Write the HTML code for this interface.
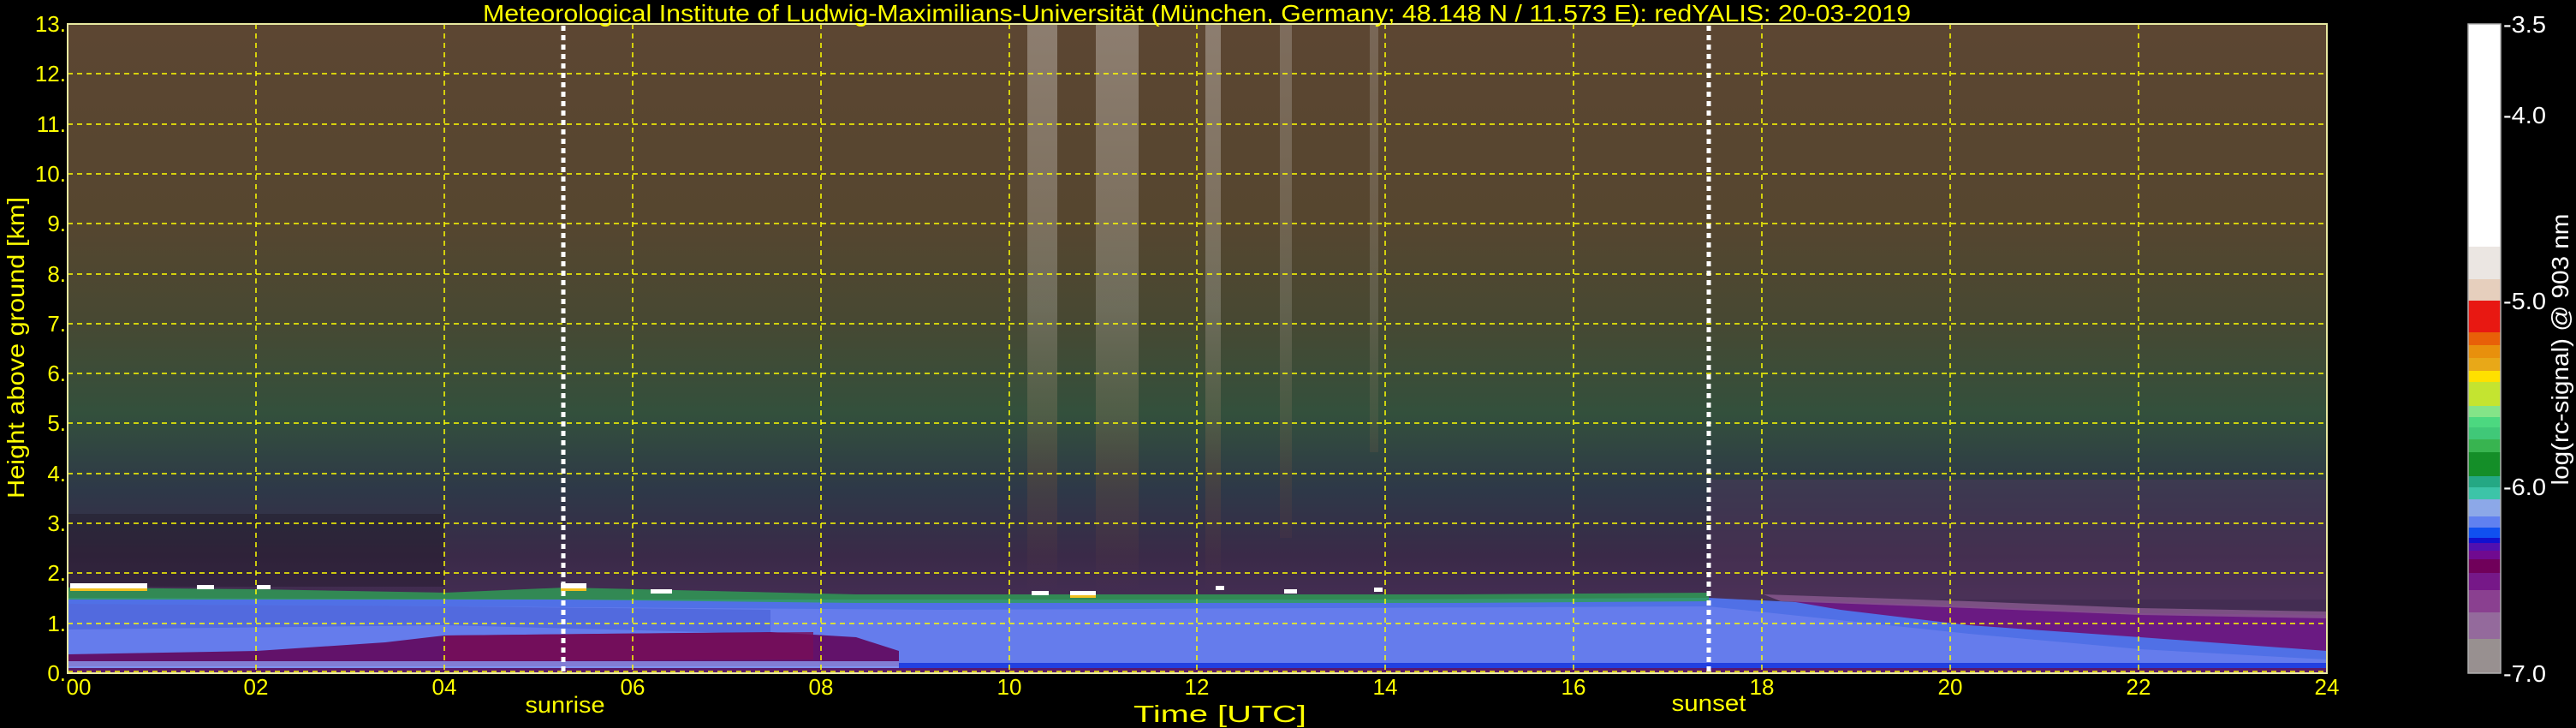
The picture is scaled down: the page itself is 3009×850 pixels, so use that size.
<!DOCTYPE html>
<html><head><meta charset="utf-8"><style>
html,body{margin:0;padding:0;background:#000;width:3009px;height:850px;overflow:hidden}
svg{display:block}
text{font-family:"Liberation Sans","DejaVu Sans",sans-serif;fill:#ffff00}
</style></head><body>
<svg width="3009" height="850" viewBox="0 0 3009 850" xmlns="http://www.w3.org/2000/svg">
<defs>
<linearGradient id="bg" x1="0" y1="28" x2="0" y2="786" gradientUnits="userSpaceOnUse">
<stop offset="0" stop-color="#5c4632"/>
<stop offset="0.3" stop-color="#56462f"/>
<stop offset="0.45" stop-color="#484832"/>
<stop offset="0.6" stop-color="#33503c"/>
<stop offset="0.72" stop-color="#2e3848"/>
<stop offset="0.82" stop-color="#3a2a48"/>
<stop offset="0.88" stop-color="#432d52"/>
<stop offset="1" stop-color="#432d52"/>
</linearGradient>
<linearGradient id="streak" x1="0" y1="28" x2="0" y2="690" gradientUnits="userSpaceOnUse">
<stop offset="0" stop-color="#fff" stop-opacity="0.3"/>
<stop offset="0.5" stop-color="#fff" stop-opacity="0.2"/>
<stop offset="0.8" stop-color="#c86a30" stop-opacity="0.15"/>
<stop offset="1" stop-color="#c86a30" stop-opacity="0"/>
</linearGradient>
</defs>

<rect x="79" y="28" width="2639" height="758" fill="url(#bg)"/>
<rect x="79" y="600" width="440" height="85" fill="#1a1420" opacity="0.35"/>
<rect x="1996" y="560" width="722" height="140" fill="#5a3a62" opacity="0.35"/>
<rect x="1200" y="28" width="35" height="660" fill="url(#streak)"/>
<rect x="1280" y="28" width="50" height="660" fill="url(#streak)"/>
<rect x="1408" y="28" width="18" height="660" fill="url(#streak)"/>
<rect x="1495" y="28" width="14" height="600" fill="url(#streak)" opacity="0.7"/>
<rect x="1600" y="28" width="10" height="500" fill="url(#streak)" opacity="0.6"/>

<polygon points="79,698 700,700 1100,700 1600,700 1996,698 2200,708 2450,715 2718,722 2718,786 79,786" fill="#5070e6"/>
<polygon points="79,686 300,688 520,692 660,686 1000,694 1400,694 1700,694 1996,692 1996,702 1700,704 1400,704 1000,704 660,700 520,700 300,700 79,700" fill="#2ea055" opacity="0.8"/>
<polygon points="79,705 520,708 1100,712 1996,708 2300,740 2500,758 2718,770 2718,776 79,776 79,745" fill="#6a80ee" opacity="0.8"/>
<polygon points="79,705 520,708 900,712 900,740 520,730 79,735" fill="#4a62d8" opacity="0.7"/>
<polygon points="2080,700 2300,708 2500,716 2718,718 2718,760 2500,744 2300,730 2150,712" fill="#6a1a82"/>
<polygon points="2060,694 2300,702 2500,710 2718,714 2718,722 2500,718 2300,710 2080,702" fill="#8a5a90" opacity="0.8"/>
<polygon points="79,764 300,760 450,750 519,742 700,740 900,738 1000,744 1050,760 1050,778 79,778" fill="#62126a"/>
<polygon points="519,742 700,740 950,738 950,770 519,772" fill="#780e58" opacity="0.8"/>
<polygon points="79,772 1050,772 1050,780 79,780" fill="#8a98f0" opacity="0.8"/>
<rect x="1050" y="774" width="1668" height="6" fill="#2240e0"/>
<rect x="79" y="780" width="2639" height="6" fill="#5a1a6a"/>
<g fill="#fff">
<rect x="82" y="681" width="90" height="6"/><rect x="230" y="683" width="20" height="5"/>
<rect x="300" y="683" width="16" height="5"/><rect x="655" y="681" width="30" height="6"/>
<rect x="760" y="688" width="25" height="5"/><rect x="1205" y="690" width="20" height="5"/>
<rect x="1250" y="690" width="30" height="5"/><rect x="1420" y="684" width="10" height="5"/>
<rect x="1500" y="688" width="15" height="5"/><rect x="1605" y="686" width="10" height="5"/>
</g>
<g fill="#f0c020"><rect x="82" y="687" width="90" height="3"/><rect x="655" y="687" width="30" height="3"/><rect x="1250" y="695" width="30" height="3"/></g>

<g stroke="#ffff00" stroke-width="1.5" stroke-dasharray="6,5" fill="none">
<path d="M299 28V786M519 28V786M739 28V786M959 28V786M1179 28V786M1398 28V786M1618 28V786M1838 28V786M2058 28V786M2278 28V786M2498 28V786"/>
<path d="M79 728H2718M79 669H2718M79 611H2718M79 553H2718M79 494H2718M79 436H2718M79 378H2718M79 320H2718M79 261H2718M79 203H2718M79 145H2718M79 86H2718M79 784H2718"/>
</g>
<rect x="79" y="28" width="2639" height="758" fill="none" stroke="#e8e8a0" stroke-width="2"/>

<g stroke="#fff" stroke-width="5" stroke-dasharray="6,5">
<line x1="658" y1="30" x2="658" y2="786"/>
<line x1="1996" y1="30" x2="1996" y2="786"/>
</g>

<text x="564" y="25" font-size="28" textLength="1668" lengthAdjust="spacingAndGlyphs">Meteorological Institute of Ludwig-Maximilians-Universität (München, Germany; 48.148 N / 11.573 E):    redYALIS: 20-03-2019</text>

<g font-size="26" text-anchor="end">
<text x="77" y="795">0.</text><text x="77" y="737">1.</text><text x="77" y="678">2.</text>
<text x="77" y="620">3.</text><text x="77" y="562">4.</text><text x="77" y="503">5.</text>
<text x="77" y="445">6.</text><text x="77" y="387">7.</text><text x="77" y="329">8.</text>
<text x="77" y="270">9.</text><text x="77" y="212">10.</text><text x="77" y="154">11.</text>
<text x="77" y="95">12.</text><text x="77" y="37">13.</text>
</g>
<text transform="translate(28,406) rotate(-90)" font-size="28" text-anchor="middle" textLength="352" lengthAdjust="spacingAndGlyphs">Height above ground [km]</text>

<g font-size="26" text-anchor="middle">
<text x="92" y="811">00</text><text x="299" y="811">02</text><text x="519" y="811">04</text>
<text x="739" y="811">06</text><text x="959" y="811">08</text><text x="1179" y="811">10</text>
<text x="1398" y="811">12</text><text x="1618" y="811">14</text><text x="1838" y="811">16</text>
<text x="2058" y="811">18</text><text x="2278" y="811">20</text><text x="2498" y="811">22</text>
<text x="2718" y="811">24</text>
</g>
<text x="660" y="832" font-size="27" text-anchor="middle" textLength="93" lengthAdjust="spacingAndGlyphs">sunrise</text>
<text x="1996" y="830" font-size="27" text-anchor="middle" textLength="87" lengthAdjust="spacingAndGlyphs">sunset</text>
<text x="1425" y="843" font-size="28" text-anchor="middle" textLength="202" lengthAdjust="spacingAndGlyphs">Time [UTC]</text>

<g>
<rect x="2883" y="28" width="38" height="260" fill="#ffffff"/>
<rect x="2883" y="288" width="38" height="38" fill="#ebe6e2"/>
<rect x="2883" y="326" width="38" height="25" fill="#e6cfbd"/>
<rect x="2883" y="351" width="38" height="37" fill="#e81812"/>
<rect x="2883" y="388" width="38" height="15" fill="#e86008"/>
<rect x="2883" y="403" width="38" height="15" fill="#e8900c"/>
<rect x="2883" y="418" width="38" height="15" fill="#e8a818"/>
<rect x="2883" y="433" width="38" height="13" fill="#ffe000"/>
<rect x="2883" y="446" width="38" height="28" fill="#c4e430"/>
<rect x="2883" y="474" width="38" height="13" fill="#84e488"/>
<rect x="2883" y="487" width="38" height="12" fill="#4cd880"/>
<rect x="2883" y="499" width="38" height="14" fill="#40c878"/>
<rect x="2883" y="513" width="38" height="15" fill="#38b450"/>
<rect x="2883" y="528" width="38" height="28" fill="#148e28"/>
<rect x="2883" y="556" width="38" height="13" fill="#24a884"/>
<rect x="2883" y="569" width="38" height="14" fill="#3cc4a8"/>
<rect x="2883" y="583" width="38" height="20" fill="#8ca8e8"/>
<rect x="2883" y="603" width="38" height="13" fill="#6080f0"/>
<rect x="2883" y="616" width="38" height="12" fill="#1050f0"/>
<rect x="2883" y="628" width="38" height="6" fill="#1010d0"/>
<rect x="2883" y="634" width="38" height="9" fill="#5010b0"/>
<rect x="2883" y="643" width="38" height="10" fill="#700a90"/>
<rect x="2883" y="653" width="38" height="16" fill="#70005a"/>
<rect x="2883" y="669" width="38" height="20" fill="#761888"/>
<rect x="2883" y="689" width="38" height="26" fill="#8a4090"/>
<rect x="2883" y="715" width="38" height="31" fill="#946a9c"/>
<rect x="2883" y="746" width="38" height="40" fill="#989090"/>
<rect x="2883" y="28" width="38" height="758" fill="none" stroke="#b0b0b0" stroke-width="1.5"/>
</g>
<g font-size="28">
<text x="2924" y="38" style="fill:#fff" textLength="50" lengthAdjust="spacingAndGlyphs">-3.5</text>
<text x="2924" y="144" style="fill:#fff" textLength="50" lengthAdjust="spacingAndGlyphs">-4.0</text>
<text x="2924" y="361" style="fill:#fff" textLength="50" lengthAdjust="spacingAndGlyphs">-5.0</text>
<text x="2924" y="578" style="fill:#fff" textLength="50" lengthAdjust="spacingAndGlyphs">-6.0</text>
<text x="2924" y="796" style="fill:#fff" textLength="50" lengthAdjust="spacingAndGlyphs">-7.0</text>
</g>
<text transform="translate(3000,408) rotate(-90)" font-size="28" text-anchor="middle" style="fill:#fff" textLength="317" lengthAdjust="spacingAndGlyphs">log(rc-signal) @ 903 nm</text>
</svg>
</body></html>
